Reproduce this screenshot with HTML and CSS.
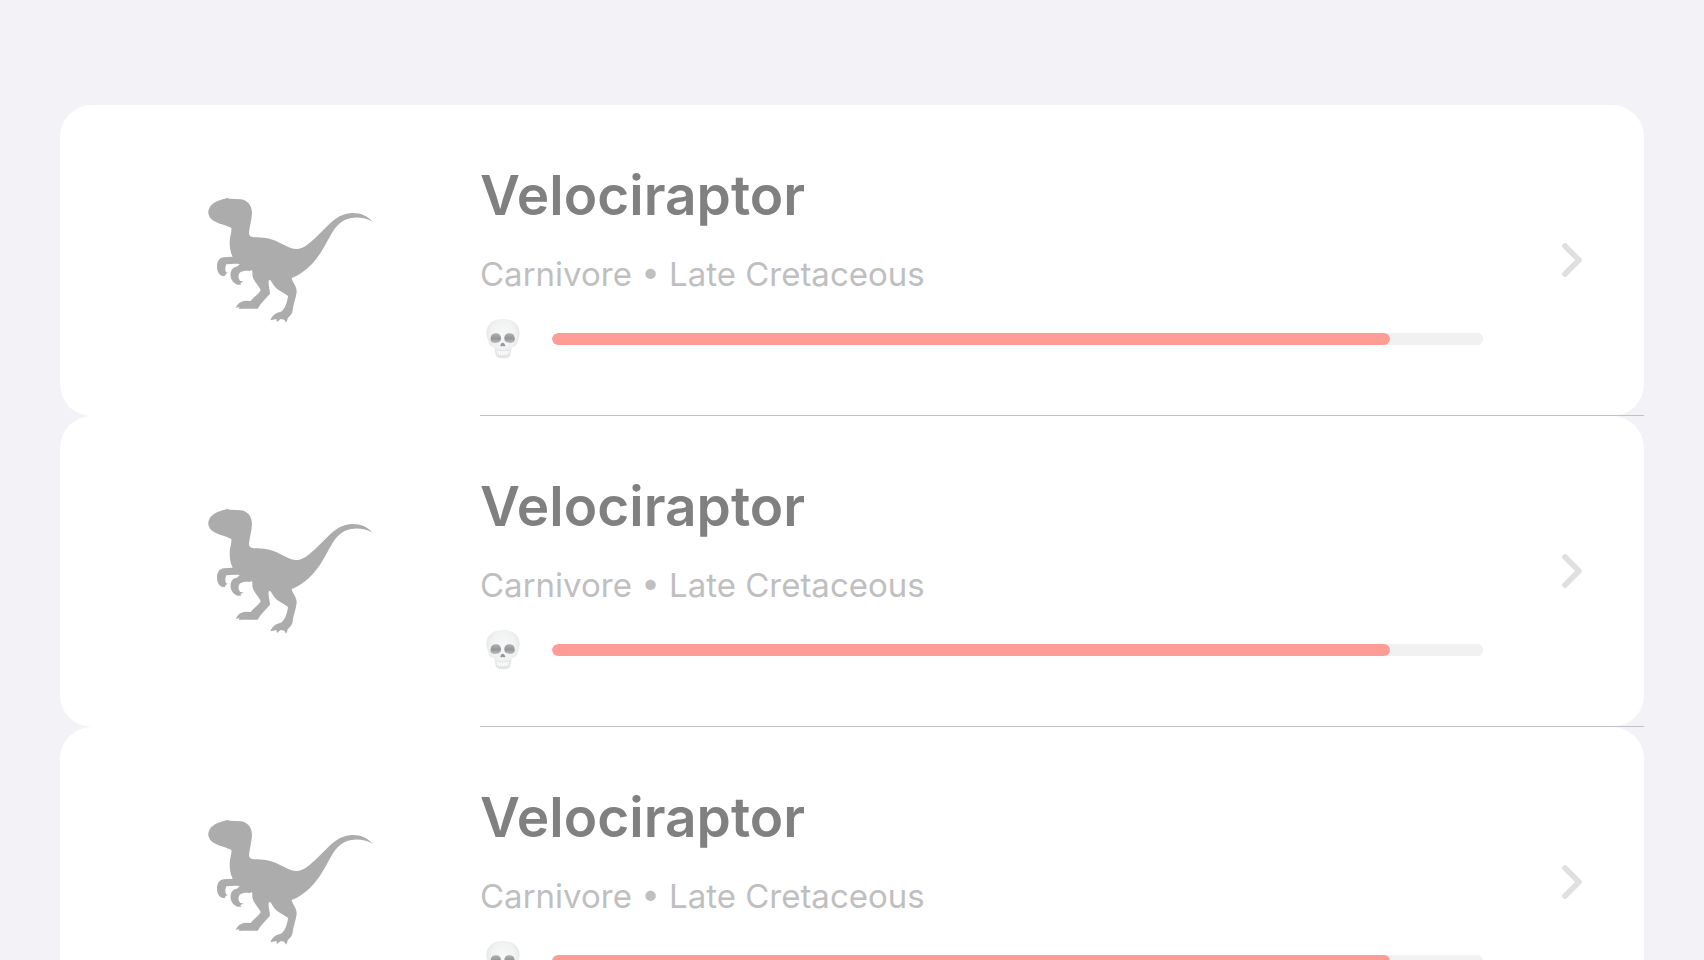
FILE: index.html
```html
<!DOCTYPE html>
<html lang="en">
<head>
<meta charset="utf-8">
<meta name="viewport" content="width=device-width, initial-scale=1">
<title>Dinosaurs</title>
<link rel="stylesheet" href="styles.css">
</head>
<body>
<svg class="sprites" aria-hidden="true">
  <defs>
    <radialGradient id="bone" cx=".5" cy=".4" r=".6">
      <stop offset="0" stop-color="#f8f8f9"/>
      <stop offset=".6" stop-color="#f1f2f2"/>
      <stop offset="1" stop-color="#e0e1e2"/>
    </radialGradient>
    <linearGradient id="socket" x1="0" y1="0" x2="0" y2="1">
      <stop offset="0" stop-color="#b0b1b3"/>
      <stop offset=".55" stop-color="#949597"/>
      <stop offset="1" stop-color="#bcbdbe"/>
    </linearGradient>
    <symbol id="raptor" viewBox="0 0 540 420">
      <path d="M81 24L90 26L123 28C143 31 155 45 156 69C155 91 149 110 147 127C146 136 151 141 161 142C188 142 213 145 240 159C258 167 275 178 290 177C310 177 326 162 345 145L385 105C407 84 427 71 454 69C482 68 502 77 518 95C502 86 482 82 463 83C433 84 415 100 400 122C383 148 369 184 341 216C321 239 300 254 275 264C277 279 290 285 290 305C288 324 280 341 278 360C278 371 269 378 263 385L262 390L258 398L253 389L242 387L231 396L229 387L219 389L211 391C216 376 228 368 243 365C255 357 262 337 264 318C249 306 229 300 219 283C215 275 212 269 207 270C203 279 209 295 210 311C198 325 183 338 173 356L128 356L116 357L119 352L107 353C113 340 122 333 136 332L152 333C163 319 179 310 182 300C176 286 160 273 157 256C157 248 158 242 154 240L149 244C141 241 128 243 119 248C114 256 114 265 120 272L131 275L121 279L124 284L112 284C102 280 93 271 92 259C90 243 97 233 108 231C116 229 115 224 120 223C108 220 94 222 79 223C75 231 75 240 78 247L84 248L77 252L75 258L68 258C57 254 51 244 51 230C51 213 59 203 72 202L98 200C91 187 89 173 89 154C90 136 96 125 94 114C80 106 56 103 38 91L30 83L25 71C24 39 57 31 81 24Z"/>
    </symbol>
    <symbol id="skull" viewBox="0 0 102 120">
      <path fill="url(#bone)" d="M51 0C82 0 101 17 101 42C101 52 97 59 95 67C94 78 88 83 78 85C76 92 75 101 72 110C67 120 35 120 30 110C27 101 26 92 24 85C14 83 8 78 7 67C5 59 1 52 1 42C1 17 20 0 51 0Z"/>
      <path fill="url(#socket)" d="M28 43C38 41 45 48 45 58C45 68 38 72 28 72C17 72 12 67 14 57C15 48 19 44 28 43Z"/>
      <path fill="url(#socket)" d="M72 43C62 41 55 48 55 58C55 68 62 72 72 72C83 72 88 67 86 57C85 48 81 44 72 43Z"/>
      <path fill="#97989a" d="M50 71C46 71 43 77 43 81Q47 83 50 80Q53 83 58 81C58 77 54 71 50 71Z"/>
      <path fill="#fff" stroke="#d6d7d8" stroke-width="1.5" d="M30 93Q50 99 70 93L68 107Q50 113 32 107ZM36 95V108M43 96V109M50 97V110M57 96V109M64 95V108"/>
    </symbol>
    <symbol id="chevron" viewBox="0 0 20 34">
      <path fill="none" stroke="#dfdfdf" stroke-width="5.6" stroke-linecap="round" stroke-linejoin="round" d="M3 3L17 17L3 31"/>
    </symbol>
  </defs>
</svg>
<main>
  <ul class="list">
    <li class="item">
      <a class="card" href="#velociraptor-1">
        <svg class="raptor" aria-hidden="true"><use href="#raptor"/></svg>
        <div class="details">
          <h2 class="name">Velociraptor</h2>
          <p class="facts">Carnivore • Late Cretaceous</p>
          <div class="danger">
            <svg class="skull" aria-hidden="true"><use href="#skull"/></svg>
            <progress class="meter" aria-label="Danger" value="90" max="100"></progress>
          </div>
        </div>
        <svg class="chevron" aria-hidden="true"><use href="#chevron"/></svg>
      </a>
    </li>
    <li class="item">
      <a class="card" href="#velociraptor-2">
        <svg class="raptor" aria-hidden="true"><use href="#raptor"/></svg>
        <div class="details">
          <h2 class="name">Velociraptor</h2>
          <p class="facts">Carnivore • Late Cretaceous</p>
          <div class="danger">
            <svg class="skull" aria-hidden="true"><use href="#skull"/></svg>
            <progress class="meter" aria-label="Danger" value="90" max="100"></progress>
          </div>
        </div>
        <svg class="chevron" aria-hidden="true"><use href="#chevron"/></svg>
      </a>
    </li>
    <li class="item">
      <a class="card" href="#velociraptor-3">
        <svg class="raptor" aria-hidden="true"><use href="#raptor"/></svg>
        <div class="details">
          <h2 class="name">Velociraptor</h2>
          <p class="facts">Carnivore • Late Cretaceous</p>
          <div class="danger">
            <svg class="skull" aria-hidden="true"><use href="#skull"/></svg>
            <progress class="meter" aria-label="Danger" value="90" max="100"></progress>
          </div>
        </div>
        <svg class="chevron" aria-hidden="true"><use href="#chevron"/></svg>
      </a>
    </li>
  </ul>
</main>
</body>
</html>
```
FILE: styles.css
```css
* { box-sizing: border-box; }

body {
  margin: 0;
  height: 100vh;
  overflow: hidden;
  background: #f2f2f7;
  font-family: Inter, "Liberation Sans", sans-serif;
}

.sprites { position: absolute; width: 0; height: 0; }

.list {
  margin: 0;
  padding: 105px 60px 0;
  list-style: none;
}

.item { position: relative; }

/* Hairline over the seam between two cards, aligned with the text column. */
.item::after {
  content: "";
  position: absolute;
  right: 0;
  bottom: 0;
  left: 420px;
  height: 1px;
  background: #c2c1c7;
}

.card {
  display: flex;
  align-items: center;
  padding: 56px 62px 57px 140px;
  border-radius: 32px;
  background: #fff;
  color: inherit;
  text-decoration: none;
}

.raptor {
  flex: none;
  width: 180px;
  height: 140px;
  margin-right: 100px;
  fill: #acacac;
}

.details { flex: 1; min-width: 0; }

.name {
  margin: 0 0 25px;
  color: #808080;
  font-size: 55px;
  font-weight: 600;
  line-height: 68px;
}

.facts {
  margin: 0 0 25px;
  color: #bfbfbf;
  font-size: 33px;
  line-height: 40px;
}

.danger {
  display: flex;
  align-items: center;
  height: 40px;
  padding-left: 6px;
  gap: 32px;
}

.skull { flex: none; width: 34px; height: 40px; }

.meter {
  appearance: none;
  flex: 1;
  min-width: 0;
  height: 12px;
  border: 0;
  border-radius: 6px;
  overflow: hidden;
  background: #f1f1f1;
}

.meter::-webkit-progress-bar { background: #f1f1f1; border-radius: 6px; }
.meter::-webkit-progress-value { background: #ff9c96; border-radius: 6px; }
.meter::-moz-progress-bar { background: #ff9c96; border-radius: 6px; }

.chevron { flex: none; width: 20px; height: 34px; margin-left: 79px; }
```
